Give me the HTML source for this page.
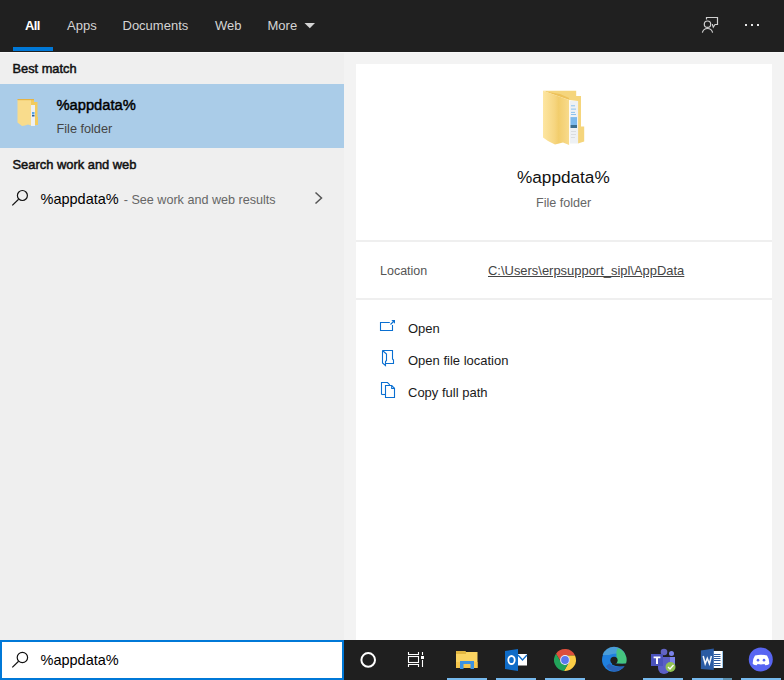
<!DOCTYPE html>
<html><head><meta charset="utf-8">
<style>
*{margin:0;padding:0;box-sizing:border-box}
html,body{width:784px;height:680px;overflow:hidden;background:#f3f3f3;font-family:"Liberation Sans",sans-serif}
.abs{position:absolute;white-space:nowrap}
#hdr{position:absolute;left:0;top:0;width:784px;height:52px;background:#202020}
#hl{position:absolute;left:0;top:52px;width:784px;height:1px;background:#f8f8f8}
#left{position:absolute;left:0;top:53px;width:344px;height:587px;background:#efefef}
#sel{position:absolute;left:0;top:84px;width:344px;height:64px;background:#aacce8}
#card{position:absolute;left:356px;top:64px;width:416px;height:576px;background:#fff}
.sep{position:absolute;left:356px;width:416px;height:2px;background:#efefef}
.tab{position:absolute;top:18px;font-size:13px;color:#d4d4d4;line-height:16px}
#tb{position:absolute;left:0;top:640px;width:784px;height:40px;background:#1f1f1f}
#sb{position:absolute;left:0;top:640px;width:344px;height:40px;background:#fff;border:2px solid #0078d7}
.ul{position:absolute;top:678px;width:40px;height:2px;background:#76b9ed}
.act{position:absolute;left:408px;font-size:13px;color:#1a1a1a;line-height:16px}
</style></head><body>
<div id="hdr"></div>
<div id="hl"></div>
<div id="left"></div>
<div id="sel"></div>
<div id="card"></div>
<div class="sep" style="top:240px"></div>
<div class="sep" style="top:298px"></div>

<!-- tabs -->
<div class="tab abs" style="left:25px;font-weight:bold;color:#fff;letter-spacing:-0.6px">All</div>
<div style="position:absolute;left:13px;top:47px;width:40px;height:4px;background:#0078d7"></div>
<div class="tab abs" style="left:67px">Apps</div>
<div class="tab abs" style="left:122.5px">Documents</div>
<div class="tab abs" style="left:215px">Web</div>
<div class="tab abs" style="left:267.5px">More</div>
<svg class="abs" style="left:0;top:0" width="784" height="52">
<path d="M304.5 23 L315 23 L309.8 28.3 Z" fill="#d4d4d4"/>
<g fill="none" stroke="#d0d0d0" stroke-width="1.2">
<path d="M706.5 19.6 V17.5 H717.5 V24.5 H715 L713.3 27.2 L712.4 24.5 H712"/>
<circle cx="707.5" cy="24.2" r="3.2"/>
<path d="M702.4 32.7 A5.2 5.2 0 0 1 712.6 32.7"/>
</g>
<rect x="745" y="24" width="2" height="2" fill="#e6e6e6"/>
<rect x="751" y="24" width="2" height="2" fill="#e6e6e6"/>
<rect x="757" y="24" width="2" height="2" fill="#e6e6e6"/>
</svg>

<!-- left panel -->
<div class="abs" style="left:12.5px;top:62px;font-size:12.8px;color:#111;line-height:14px;-webkit-text-stroke:0.5px #111">Best match</div>
<svg class="abs" style="left:0;top:84px" width="60" height="64">
<g transform="translate(0,-84)">
<path d="M17.5 99 H34 V102 H37.5 V117 H38 V125 H35 V105 H31 Z" fill="#f2cb5e"/>
<rect x="31" y="105" width="4" height="21" fill="#eef0f3"/>
<rect x="32" y="112" width="2.5" height="2.5" fill="#5aa6e6"/>
<rect x="32" y="115" width="2.5" height="1.5" fill="#2d5f9a"/>
<path d="M17.5 100 H31 V125.5 L28 124.5 L25 125.5 L22 126 L17.5 122.5 Z" fill="#f9dc8c"/>
<rect x="17.5" y="99" width="16.5" height="1.2" fill="#e6b344"/>
</g>
</svg>
<div class="abs" style="left:56.5px;top:96.8px;font-size:14.7px;color:#000;line-height:17px;-webkit-text-stroke:0.45px #000">%appdata%</div>
<div class="abs" style="left:56.5px;top:121px;font-size:12.7px;color:#444;line-height:16px">File folder</div>
<div class="abs" style="left:12.5px;top:157.5px;font-size:12.9px;color:#111;line-height:14px;-webkit-text-stroke:0.5px #111">Search work and web</div>
<svg class="abs" style="left:0;top:180px" width="344" height="30">
<g transform="translate(0,-180)" fill="none" stroke="#111" stroke-width="1.2">
<circle cx="22.4" cy="195.5" r="5"/>
<path d="M18.6 199.2 L12.3 205.4"/>
<path d="M315.5 192.5 L321.5 198 L315.5 203.5" stroke="#555" stroke-width="1.5"/>
</g>
</svg>
<div class="abs" style="left:40.5px;top:191px;font-size:14.5px;color:#000;line-height:17px">%appdata%<span style="color:#666;font-size:12.6px;position:relative;left:1.5px"> - See work and web results</span></div>

<!-- right card -->
<svg class="abs" style="left:540px;top:86px" width="50" height="62">
<defs><linearGradient id="ff" x1="0" x2="1" y1="0" y2="0">
<stop offset="0" stop-color="#fde6a2"/><stop offset="0.45" stop-color="#f6d57f"/><stop offset="0.6" stop-color="#f2cd6c"/><stop offset="1" stop-color="#f8db8c"/></linearGradient></defs>
<g transform="translate(-540,-86)">
<path d="M543 90.7 H576.2 V95.9 H581 V126.5 H584.2 V141.6 L578 143.5 V101 L569 100 Z" fill="#f5d57c"/>
<path d="M545 91.5 L569 99.5 L569 98 L560 94 Z" fill="#e9b94c" opacity="0.7"/>
<rect x="570" y="101" width="8.1" height="42.5" fill="#eef1f4"/>
<g fill="#8cc2ee"><rect x="571" y="105.3" width="4" height="1"/><rect x="571" y="108.6" width="5" height="1"/><rect x="571" y="111.9" width="4" height="1"/><rect x="571" y="114" width="5" height="1"/></g>
<rect x="570.5" y="117.1" width="6.5" height="8" fill="#7cb9ec"/>
<rect x="570.5" y="125" width="6.5" height="3" fill="#3d6f8f"/>
<g fill="#dadde0"><rect x="571" y="131" width="5" height="1"/><rect x="571" y="134" width="5" height="1"/><rect x="571" y="137" width="4" height="1"/></g>
<path d="M543 90.7 L569.1 100.1 V145 L563 142.5 L555 144.5 L548 141 L543 137.4 Z" fill="url(#ff)"/>
</g>
</svg>
<div class="abs" style="left:517px;top:167px;font-size:17.2px;color:#111;line-height:20px">%appdata%</div>
<div class="abs" style="left:536px;top:196px;font-size:12.6px;color:#666;line-height:15px">File folder</div>

<div class="abs" style="left:380px;top:264px;font-size:12.5px;color:#555;line-height:15px">Location</div>
<div class="abs" style="left:488px;top:263px;font-size:12.95px;color:#444;line-height:15px;text-decoration:underline">C:\Users\erpsupport_sipl\AppData</div>

<svg class="abs" style="left:370px;top:310px" width="40" height="95">
<g transform="translate(-370,-310)" fill="none" stroke="#0a6fd1" stroke-width="1.1">
<path d="M389.8 322.5 H380.5 V330.5 H392.5 V325"/>
<path d="M390.5 324.5 L393.5 321.5"/>
<path d="M382.5 350.5 H392.5 V359 L393.5 360 V363.5 H385.5"/>
<path d="M382.5 350.5 V363 L385.5 365.5 V361.5 L386.5 360.5 V354 L382.5 350.5"/>
<path d="M381.5 394.5 V382.5 H387.5 L389.8 384.8"/>
<path d="M381.5 394.5 H385.5"/>
<path d="M385.5 397.5 V385.5 H391.7 L394.5 388.3 V397.5 Z"/>
<path d="M391.7 385.5 V388.5 H394.5"/>
<path d="M391.3 320 H395 V323.7 Z" fill="#0a6fd1" stroke="none"/>
</g>
</svg>
<div class="act abs" style="top:321px">Open</div>
<div class="act abs" style="top:353px">Open file location</div>
<div class="act abs" style="top:385px">Copy full path</div>

<!-- taskbar -->
<div id="tb"></div>
<div id="sb"></div>
<svg class="abs" style="left:0;top:640px" width="344" height="40">
<g transform="translate(0,-640)" fill="none" stroke="#111" stroke-width="1.2">
<circle cx="22.4" cy="657.5" r="5.2"/>
<path d="M18.6 661.3 L12.3 667.4"/>
</g>
</svg>
<div class="abs" style="left:40.5px;top:652px;font-size:14.5px;color:#000;line-height:17px">%appdata%</div>

<svg class="abs" style="left:344px;top:640px" width="440" height="40">
<g transform="translate(-344,-640)">
<circle cx="368.2" cy="659.9" r="6.8" fill="none" stroke="#fff" stroke-width="2"/>
<g fill="none" stroke="#fff" stroke-width="1.1">
<path d="M408.5 652 V654.5 H418.5 V652"/>
<rect x="408.5" y="656.5" width="10" height="6"/>
<path d="M408.5 667 V664.5 H418.5 V667"/>
<path d="M422.5 652 V655 M422.5 660 V667"/>
</g>
<rect x="421" y="656" width="3" height="3" fill="#fff"/>
<!-- explorer -->
<path d="M456 651 H465 L466 652 H477.5 V668 H456 Z" fill="#fad361"/>
<path d="M456 651 H465 L466 652 V654 H456 Z" fill="#e2b640"/>
<path d="M456 662 H477.5 V668 H456 Z" fill="#f6c64c"/>
<path d="M460 669 V661 H474 V669 H470.5 V664 H463.5 V669 Z" fill="#3b92e2"/>
<!-- outlook -->
<path d="M505 651 L518 649 V671 L505 669 Z" fill="#0f6cc8"/>
<rect x="518" y="654" width="9" height="11.5" fill="#fff"/>
<path d="M518 655 L522.5 660 L527 655" fill="none" stroke="#0f6cc8" stroke-width="1.3"/>
<ellipse cx="511.5" cy="660" rx="3.2" ry="4" fill="none" stroke="#fff" stroke-width="1.8"/>
<!-- chrome -->
<path d="M565 655.4 L575 655.4 A11 11 0 0 0 556.02 653.64 L561.02 662.3 A4.6 4.6 0 0 1 565 655.4 Z" fill="#dc4f3c"/>
<path d="M568.98 662.3 L563.98 670.96 A11 11 0 0 0 575 655.4 L565 655.4 A4.6 4.6 0 0 1 568.98 662.3 Z" fill="#fbcd45"/>
<path d="M561.02 662.3 L556.02 653.64 A11 11 0 0 0 563.98 670.96 L568.98 662.3 A4.6 4.6 0 0 1 561.02 662.3 Z" fill="#22a35a"/>
<circle cx="565" cy="660" r="4.9" fill="#eef2ff"/>
<circle cx="565" cy="660" r="3.9" fill="#5b78ee"/>
<!-- edge -->
<circle cx="614" cy="659.8" r="12" fill="#1f80de"/>
<path d="M602.6 655 A12 12 0 0 1 625.4 655 Q616 652 609 655 Z" fill="#4a9dd8"/>
<path d="M617.5 648.3 A12 12 0 0 1 626 663.8 L616.5 663.8 L616.5 656 Q616 651 617.5 648.3 Z" fill="#45c47f"/>
<circle cx="614" cy="660.3" r="3.6" fill="#1f1f1f"/>
<path d="M612 662.5 Q617 664 626 663.6 L625.2 666 Q617 667.5 612 664.5 Z" fill="#1f1f1f"/>
<path d="M609.5 663.5 Q614 668.5 624.8 666.2 Q622 670 614 671.5 Q608 670 606 666 Z" fill="#2c63b8"/>
<!-- teams -->
<circle cx="664" cy="652" r="3.3" fill="#6264c4"/>
<circle cx="671.5" cy="653.5" r="2.5" fill="#7b83eb"/>
<path d="M666 657 H675 V666 A3 3 0 0 1 669 666 Z" fill="#7b83eb"/>
<path d="M658 657 H670 V668 A6 6 0 0 1 658 668 Z" fill="#5b5fc7"/>
<rect x="651" y="654" width="12" height="12" fill="#4b53bc"/>
<path d="M653.6 656.4 H660.4 V658.2 H658 V664 H656 V658.2 H653.6 Z" fill="#fff"/>
<circle cx="670.5" cy="667" r="5" fill="#92c353"/>
<path d="M668 667 L670 669 L673.5 665" fill="none" stroke="#fff" stroke-width="1.3"/>
<!-- word -->
<rect x="709" y="651" width="14" height="17" fill="#fff"/>
<rect x="722" y="651" width="1" height="17" fill="#9cc8ea"/>
<path d="M714 654.5 H720.5 M714 656.5 H720.5 M714 658.5 H720.5 M714 660.5 H720.5 M714 663.5 H720.5 M714 665.5 H720.5" stroke="#2b579a" stroke-width="1"/>
<path d="M700.9 650.5 L713.8 648.4 V670 L700.9 668.9 Z" fill="#2b5ba3"/>
<path d="M703.2 656 L705.2 663.8 L707.3 658.3 L709.4 663.8 L711.4 656" fill="none" stroke="#f4f6fa" stroke-width="1.5"/>
<!-- discord -->
<circle cx="760.8" cy="659.5" r="12" fill="#5865f2"/>
<path d="M755 655.6 Q761 654 767 655.6 Q769.6 659.5 769.2 664 Q767.5 665.2 765.3 665.3 L764.4 664 Q761 664.8 757.6 664 L756.7 665.3 Q754.5 665.2 752.8 664 Q752.4 659.5 755 655.6 Z" fill="#fff"/>
<ellipse cx="758" cy="660.2" rx="1.3" ry="1.4" fill="#5865f2"/>
<ellipse cx="764" cy="660.2" rx="1.3" ry="1.4" fill="#5865f2"/>
</g>
</svg>
<div class="ul" style="left:447px"></div>
<div class="ul" style="left:496px"></div>
<div class="ul" style="left:545px"></div>
<div class="ul" style="left:643px"></div>
<div class="ul" style="left:692px;background:linear-gradient(90deg,#76b9ed 0,#76b9ed 31px,#5b8fae 31px)"></div>
<div class="ul" style="left:741px"></div>
</body></html>
